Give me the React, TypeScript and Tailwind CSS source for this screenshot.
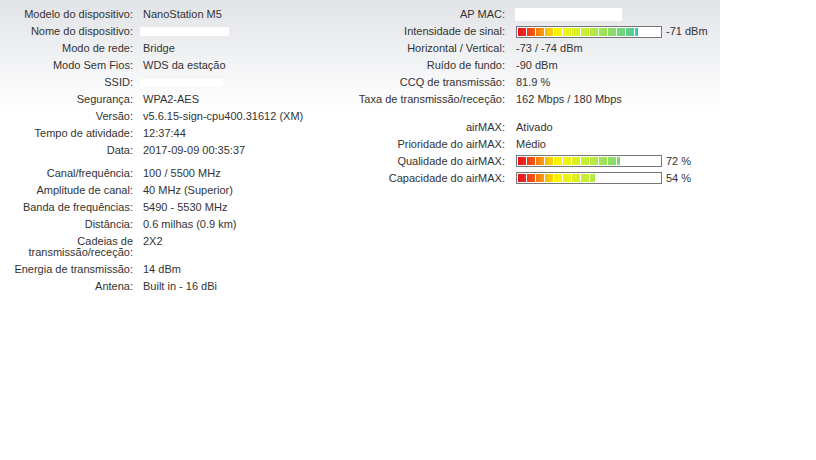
import React from "react";

type Row = { label: string; value?: React.ReactNode };

const segColors = [
  "bg-[linear-gradient(90deg,#e8121e,#f02a1c)]",
  "bg-[linear-gradient(90deg,#f03a1a,#f55a12)]",
  "bg-[linear-gradient(90deg,#f5780e,#faa00a)]",
  "bg-[linear-gradient(90deg,#fab808,#fdd404)]",
  "bg-[linear-gradient(90deg,#fff000,#fcf200)]",
  "bg-[linear-gradient(90deg,#f2f210,#eaf218)]",
  "bg-[linear-gradient(90deg,#e0f020,#d6f026)]",
  "bg-[linear-gradient(90deg,#ccf030,#c2ee36)]",
  "bg-[linear-gradient(90deg,#b8ec40,#aee846)]",
  "bg-[linear-gradient(90deg,#a4e650,#9ae256)]",
  "bg-[linear-gradient(90deg,#90e060,#86dc68)]",
  "bg-[linear-gradient(90deg,#78d874,#6ed47c)]",
  "bg-[linear-gradient(90deg,#60d08c,#56cc98)]",
  "bg-[linear-gradient(90deg,#3cc8b0,#22c0c8)]",
  "bg-[linear-gradient(90deg,#20bcd0,#14b4dc)]",
  "bg-[linear-gradient(90deg,#10b0e4,#0ca8ec)]",
];

function Meter({ pct, text }: { pct: number; text: string }) {
  return (
    <div className="flex items-center">
      <div className="h-[12px] w-[146px] border border-[#777777] bg-white p-[1px]">
        <div className="h-[8px] overflow-hidden" style={{ width: `${pct}%` }}>
          <div className="flex gap-[1px]">
            {segColors.map((c, i) => (
              <div key={i} className={`h-[8px] w-[8px] shrink-0 ${c}`} />
            ))}
          </div>
        </div>
      </div>
      <span className="pl-[4px]">{text}</span>
    </div>
  );
}

const Redacted = ({ w, h, ml = 0 }: { w: string; h: string; ml?: number }) => (
  <div className={`bg-white ${w} ${h}`} style={{ marginLeft: ml }} />
);

function InfoTable({ rows, labelWidth, gap }: { rows: Row[]; labelWidth: string; gap: string }) {
  return (
    <div>
      {rows.map((r, i) => (
        <div key={i} className="flex items-start">
          <div className={`${labelWidth} shrink-0 py-[3px] text-right leading-[11px]`}>{r.label}</div>
          <div className={`${gap} flex min-h-[17px] items-center leading-[11px]`}>{r.value}</div>
        </div>
      ))}
    </div>
  );
}

const leftTop: Row[] = [
  { label: "Modelo do dispositivo:", value: "NanoStation M5" },
  { label: "Nome do dispositivo:", value: <Redacted w="w-[89px]" h="h-[9px]" ml={-3} /> },
  { label: "Modo de rede:", value: "Bridge" },
  { label: "Modo Sem Fios:", value: "WDS da estação" },
  { label: "SSID:", value: <Redacted w="w-[83px]" h="h-[8px]" ml={-3} /> },
  { label: "Segurança:", value: "WPA2-AES" },
  { label: "Versão:", value: "v5.6.15-sign-cpu400.31612 (XM)" },
  { label: "Tempo de atividade:", value: "12:37:44" },
  { label: "Data:", value: "2017-09-09 00:35:37" },
];

const leftBottom: Row[] = [
  { label: "Canal/frequência:", value: "100 / 5500 MHz" },
  { label: "Amplitude de canal:", value: "40 MHz (Superior)" },
  { label: "Banda de frequências:", value: "5490 - 5530 MHz" },
  { label: "Distância:", value: "0.6 milhas (0.9 km)" },
  { label: "Cadeias de transmissão/receção:", value: "2X2" },
  { label: "Energia de transmissão:", value: "14 dBm" },
  { label: "Antena:", value: "Built in - 16 dBi" },
];

const rightTop: Row[] = [
  { label: "AP MAC:", value: <Redacted w="w-[107px]" h="h-[13px]" ml={-1} /> },
  { label: "Intensidade de sinal:", value: <Meter pct={84.5} text="-71 dBm" /> },
  { label: "Horizontal / Vertical:", value: "-73 / -74 dBm" },
  { label: "Ruído de fundo:", value: "-90 dBm" },
  { label: "CCQ de transmissão:", value: "81.9 %" },
  { label: "Taxa de transmissão/receção:", value: "162 Mbps / 180 Mbps" },
];

const rightBottom: Row[] = [
  { label: "airMAX:", value: "Ativado" },
  { label: "Prioridade do airMAX:", value: "Médio" },
  { label: "Qualidade do airMAX:", value: <Meter pct={72} text="72 %" /> },
  { label: "Capacidade do airMAX:", value: <Meter pct={54} text="54 %" /> },
];

export default function App() {
  return (
    <div className="min-h-screen bg-white font-['Liberation_Sans',Arial,sans-serif] text-[11px] text-[#333333]">
      <div className="flex w-[720px] bg-[linear-gradient(180deg,#e1e3e7_0px,#ffffff_110px)] pt-[6px] pb-[8px]">
        <div className="w-[355px] shrink-0">
          <InfoTable rows={leftTop} labelWidth="w-[133px]" gap="pl-[10px]" />
          <div className="h-[6px]" />
          <InfoTable rows={leftBottom} labelWidth="w-[133px]" gap="pl-[10px]" />
        </div>
        <div>
          <InfoTable rows={rightTop} labelWidth="w-[150px]" gap="pl-[11px]" />
          <div className="h-[10.5px]" />
          <InfoTable rows={rightBottom} labelWidth="w-[150px]" gap="pl-[11px]" />
        </div>
      </div>
    </div>
  );
}
